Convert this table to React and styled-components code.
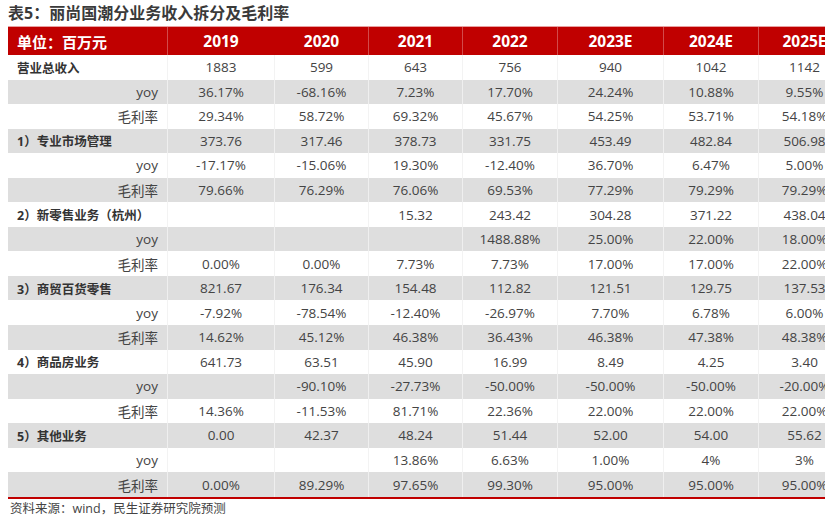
import React from 'react';
import styled, { createGlobalStyle } from 'styled-components';

const FONT = '"Open Sans", "Noto Sans CJK SC", sans-serif';
const RED = '#c00000';
const GRAY = '#dedede';

const COLS = [160, 107, 94, 94, 95, 106, 95, 92];
const YEARS = ['2019', '2020', '2021', '2022', '2023E', '2024E', '2025E'];

const ROWS = [
  { label: '营业总收入', main: true, v: ['1883', '599', '643', '756', '940', '1042', '1142'] },
  { label: 'yoy', v: ['36.17%', '-68.16%', '7.23%', '17.70%', '24.24%', '10.88%', '9.55%'] },
  { label: '毛利率', v: ['29.34%', '58.72%', '69.32%', '45.67%', '54.25%', '53.71%', '54.18%'] },
  { label: '1）专业市场管理', main: true, v: ['373.76', '317.46', '378.73', '331.75', '453.49', '482.84', '506.98'] },
  { label: 'yoy', v: ['-17.17%', '-15.06%', '19.30%', '-12.40%', '36.70%', '6.47%', '5.00%'] },
  { label: '毛利率', v: ['79.66%', '76.29%', '76.06%', '69.53%', '77.29%', '79.29%', '79.29%'] },
  { label: '2）新零售业务（杭州）', main: true, v: ['', '', '15.32', '243.42', '304.28', '371.22', '438.04'] },
  { label: 'yoy', v: ['', '', '', '1488.88%', '25.00%', '22.00%', '18.00%'] },
  { label: '毛利率', v: ['0.00%', '0.00%', '7.73%', '7.73%', '17.00%', '17.00%', '22.00%'] },
  { label: '3）商贸百货零售', main: true, v: ['821.67', '176.34', '154.48', '112.82', '121.51', '129.75', '137.53'] },
  { label: 'yoy', v: ['-7.92%', '-78.54%', '-12.40%', '-26.97%', '7.70%', '6.78%', '6.00%'] },
  { label: '毛利率', v: ['14.62%', '45.12%', '46.38%', '36.43%', '46.38%', '47.38%', '48.38%'] },
  { label: '4）商品房业务', main: true, v: ['641.73', '63.51', '45.90', '16.99', '8.49', '4.25', '3.40'] },
  { label: 'yoy', v: ['', '-90.10%', '-27.73%', '-50.00%', '-50.00%', '-50.00%', '-20.00%'] },
  { label: '毛利率', v: ['14.36%', '-11.53%', '81.71%', '22.36%', '22.00%', '22.00%', '22.00%'] },
  { label: '5）其他业务', main: true, v: ['0.00', '42.37', '48.24', '51.44', '52.00', '54.00', '55.62'] },
  { label: 'yoy', v: ['', '', '13.86%', '6.63%', '1.00%', '4%', '3%'] },
  { label: '毛利率', v: ['0.00%', '89.29%', '97.65%', '99.30%', '95.00%', '95.00%', '95.00%'] },
];

const GlobalStyle = createGlobalStyle`
  html, body {
    margin: 0;
    padding: 0;
    background: #ffffff;
    overflow: hidden;
  }
  body {
    font-family: ${FONT};
    color: #444444;
  }
`;

const Page = styled.div`
  width: 825px;
  height: 518px;
  overflow: hidden;
  padding: 0 0 0 8px;
  box-sizing: border-box;
`;

const Title = styled.h1`
  margin: 0;
  height: 26px;
  padding-top: 3px;
  box-sizing: border-box;
  font-size: 16px;
  line-height: 20px;
  font-weight: 700;
  color: #3a3a3a;
  white-space: nowrap;
`;

const Table = styled.div`
  display: grid;
  grid-template-columns: ${COLS.map(c => `${c}px`).join(' ')};
  width: max-content;
  border-top: 1px solid #e8a0a0;
  border-bottom: 2px solid ${RED};
`;

const HeadCell = styled.div`
  height: 28px;
  background: ${RED};
  color: #ffffff;
  font-weight: 700;
  font-size: ${props => (props.first ? '15px' : '15.5px')};
  display: flex;
  align-items: center;
  justify-content: ${props => (props.first ? 'flex-start' : 'center')};
  padding-left: ${props => (props.first ? '9px' : '0')};
  border-right: 1px solid ${props => (props.plain ? RED : '#d24a4a')};
  white-space: nowrap;
`;

const Cell = styled.div`
  height: 24.55px;
  background: ${props => (props.shaded ? GRAY : '#ffffff')};
  border-right: 1px solid ${props => (props.shaded ? '#efefef' : '#f3f3f3')};
  font-size: 13.5px;
  display: flex;
  align-items: center;
  justify-content: center;
  white-space: nowrap;
  color: #444444;
`;

const LabelCell = styled(Cell)`
  justify-content: ${props => (props.main ? 'flex-start' : 'flex-end')};
  padding: ${props => (props.main ? '0 0 0 9px' : '0 9px 0 0')};
  font-weight: ${props => (props.main ? 700 : 400)};
  color: ${props => (props.main ? '#333333' : '#444444')};
  font-size: ${props => (props.main ? '12.5px' : '13.5px')};
`;

const Source = styled.div`
  margin-top: 2px;
  font-size: 12.5px;
  line-height: 16px;
  color: #444444;
  padding-left: 2px;
`;

export default function App() {
  return (
    <Page>
      <GlobalStyle />
      <Title>表5：丽尚国潮分业务收入拆分及毛利率</Title>
      <Table>
        <HeadCell first>单位：百万元</HeadCell>
        {YEARS.map((y, i) => (
          <HeadCell key={y} plain={i === 0}>
            {y}
          </HeadCell>
        ))}
        {ROWS.map((row, r) => {
          const shaded = r % 2 === 1;
          return (
            <React.Fragment key={r}>
              <LabelCell main={row.main} shaded={shaded}>
                {row.label}
              </LabelCell>
              {row.v.map((val, c) => (
                <Cell key={c} shaded={shaded}>
                  {val}
                </Cell>
              ))}
            </React.Fragment>
          );
        })}
      </Table>
      <Source>资料来源：wind，民生证券研究院预测</Source>
    </Page>
  );
}
